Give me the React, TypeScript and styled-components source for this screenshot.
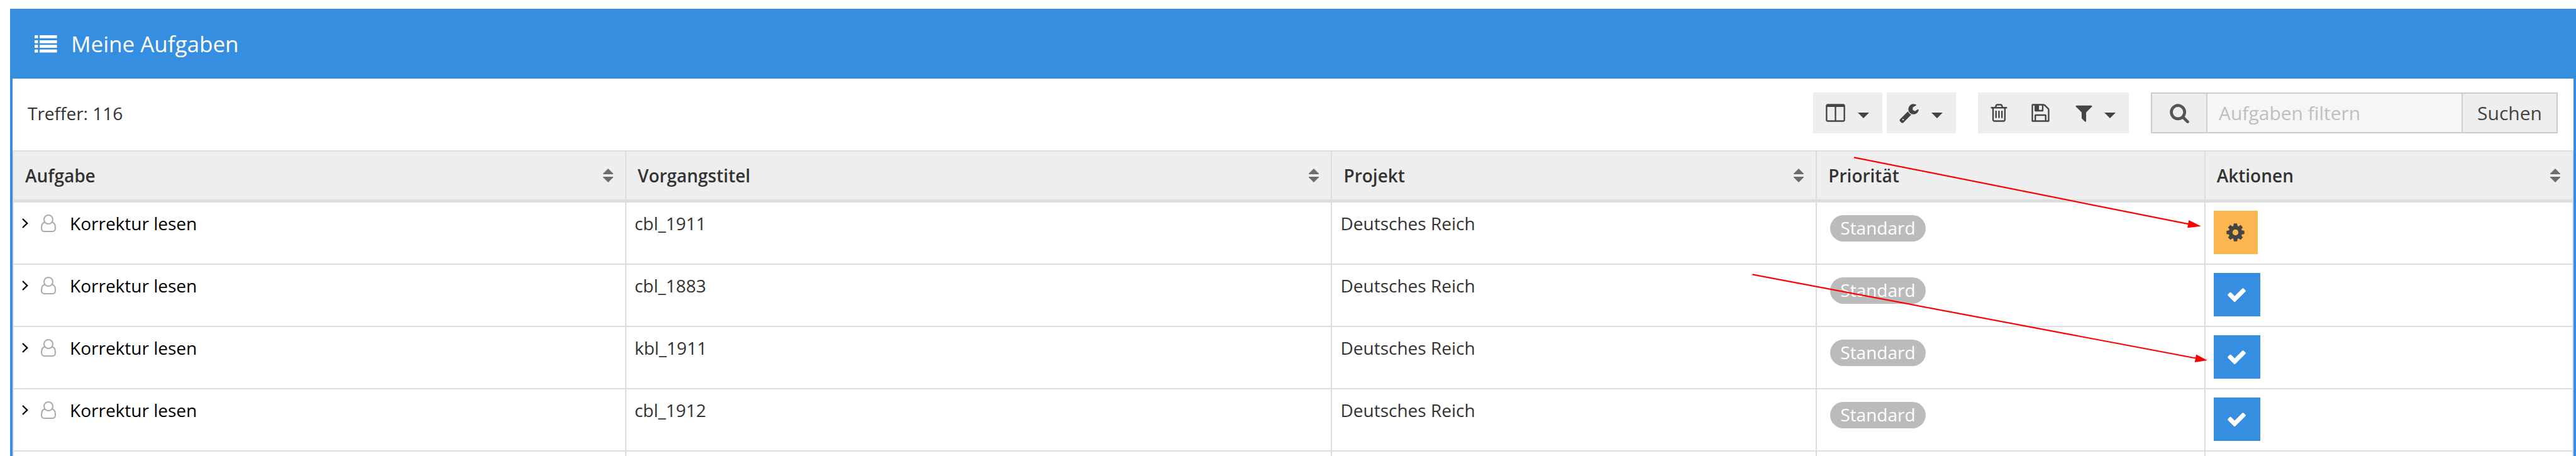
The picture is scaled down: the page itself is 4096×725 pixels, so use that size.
import React from 'react';
import styled, { createGlobalStyle } from 'styled-components';

const BLUE = '#368ee0';
const LINE = '#dddddd';

const GlobalStyle = createGlobalStyle`
  * { box-sizing: border-box; }
  body {
    margin: 0;
    background: #ffffff;
    color: #333333;
    font-family: 'Open Sans', 'Noto Sans', sans-serif;
    font-size: 28px;
    line-height: 40px;
  }
  button, input { font: inherit; color: inherit; margin: 0; }
`;

const Page = styled.div`
  position: relative;
  display: flex;
  height: 100vh;
  padding: 14px 0 0 16px;
  overflow: hidden;
`;

const Panel = styled.main`
  flex: 1;
  min-width: 0;
  border: solid ${BLUE};
  border-width: 0 4px;
`;

const PanelHeader = styled.header`
  display: flex;
  align-items: center;
  gap: 22px;
  height: 111px;
  padding: 0 35px;
  background: ${BLUE};
  color: #ffffff;
`;

const Title = styled.h1`
  margin: 0;
  font-size: 35px;
  font-weight: 400;
`;

const Toolbar = styled.div`
  display: flex;
  align-items: center;
  padding: 22px 25px 27px 24px;
`;

const HitCount = styled.span`
  flex: 1;
`;

const ButtonGroup = styled.div`
  display: flex;
  gap: 7px;
  margin-right: 35px;
`;

const JoinedGroup = styled(ButtonGroup)`
  gap: 0;
`;

const ToolButton = styled.button`
  display: flex;
  align-items: center;
  justify-content: center;
  height: 65px;
  min-width: 66px;
  padding: 0;
  border: 0;
  background: #eeeeee;
  color: #444444;
`;

const MenuButton = styled(ToolButton)<{ $tight?: boolean }>`
  gap: ${p => (p.$tight ? 16 : 19)}px;
  padding: 0 21px 0 ${p => (p.$tight ? 20 : 19)}px;
`;

const SearchForm = styled.form`
  display: flex;
  height: 65px;
  border: 2px solid #cccccc;
  background: #eeeeee;
  color: #444444;
  font-size: 30px;
`;

const SearchLabel = styled.label`
  display: flex;
  align-items: center;
  justify-content: center;
  width: 88px;
  border-right: 2px solid #cccccc;
  color: #555555;
`;

const SearchInput = styled.input`
  width: 404px;
  padding: 0 18px;
  border: 0;
  border-radius: 0;
  outline: 0;
  background: #f6f6f6;
  &::placeholder { color: #bfbfbf; opacity: 1; }
`;

const SearchButton = styled.button`
  width: 151px;
  padding: 0;
  border: 0;
  border-left: 2px solid #cccccc;
  background: transparent;
`;

const TaskTable = styled.table`
  width: 100%;
  table-layout: fixed;
  border-collapse: separate;
  border-spacing: 0;
  border-right: 2px solid ${LINE};
`;

const Column = styled.col<{ $share: number }>`
  width: ${p => p.$share}%;
`;

const HeadCell = styled.th`
  height: 83px;
  padding: 0 19px 0 18px;
  border: solid ${LINE};
  border-width: 2px 0 5px 2px;
  background: #eeeeee;
  font-weight: 600;
  text-align: left;
`;

const HeadContent = styled.div`
  display: flex;
  align-items: center;
  justify-content: space-between;
`;

const SortButton = styled.button`
  display: flex;
  padding: 0;
  border: 0;
  background: none;
  color: #6b6e6b;
`;

const Cell = styled.td`
  height: 99px;
  padding: 13px 13px 0;
  border: solid ${LINE};
  border-width: 0 0 2px 2px;
  vertical-align: top;
`;

const TaskLink = styled.a`
  display: flex;
  align-items: center;
  color: #000000;
  text-decoration: none;
`;

const TaskName = styled.span`
  margin-left: 20px;
`;

const PriorityBadge = styled.span`
  display: block;
  width: max-content;
  margin: 7px 0 0 8px;
  padding: 0 16px 2px;
  border-radius: 21px;
  background: #bbbbbb;
  color: #ffffff;
`;

const ActionButton = styled.button<{ $kind: 'work' | 'accept' }>`
  display: flex;
  align-items: center;
  justify-content: center;
  width: ${p => (p.$kind === 'work' ? 70 : 74)}px;
  height: 69px;
  padding: 0;
  border: 0;
  background: ${p => (p.$kind === 'work' ? '#fab750' : BLUE)};
  color: ${p => (p.$kind === 'work' ? '#444444' : '#ffffff')};
`;

const Annotation = styled.svg`
  position: absolute;
  top: 0;
  left: 0;
  width: 100%;
  height: auto;
  pointer-events: none;
`;

const paths = {
  columns:
    'M224 1536h608v-1152h-640v1120q0 13 9.5 22.5t22.5 9.5zm1376-32v-1120h-640v1152h608q13 0 22.5-9.5t9.5-22.5zm128-1216v1216q0 66-47 113t-113 47h-1344q-66 0-113-47t-47-113v-1216q0-66 47-113t113-47h1344q66 0 113 47t47 113z',
  wrench:
    'M448 1472q0-26-19-45t-45-19-45 19-19 45 19 45 45 19 45-19 19-45zm644-420l-682 682q-37 37-90 37-52 0-91-37l-106-108q-38-36-38-90 0-53 38-91l681-681q39 98 114.5 173.5t173.5 114.5zm634-435q0 39-23 106-47 134-164.5 217.5t-258.5 83.5q-185 0-316.5-131.5t-131.5-316.5 131.5-316.5 316.5-131.5q58 0 121.5 16.5t107.5 46.5q16 11 16 28t-16 28l-293 169v224l193 107q5-3 79-48.5t135.5-81 70.5-35.5q15 0 23.5 10t8.5 25z',
  trash:
    'M704 736v576q0 14-9 23t-23 9h-64q-14 0-23-9t-9-23v-576q0-14 9-23t23-9h64q14 0 23 9t9 23zm256 0v576q0 14-9 23t-23 9h-64q-14 0-23-9t-9-23v-576q0-14 9-23t23-9h64q14 0 23 9t9 23zm256 0v576q0 14-9 23t-23 9h-64q-14 0-23-9t-9-23v-576q0-14 9-23t23-9h64q14 0 23 9t9 23zm128 724v-948h-896v948q0 22 7 40.5t14.5 27 10.5 8.5h832q3 0 10.5-8.5t14.5-27 7-40.5zm-672-1076h448l-48-117q-7-9-17-11h-317q-10 2-17 11zm928 32v64q0 14-9 23t-23 9h-96v948q0 83-47 143.5t-113 60.5h-832q-66 0-113-58.5t-47-141.5v-952h-96q-14 0-23-9t-9-23v-64q0-14 9-23t23-9h309l70-167q15-37 54-63t79-26h320q40 0 79 26t54 63l70 167h309q14 0 23 9t9 23z',
  save:
    'M512 1536h768v-384h-768v384zm896 0h128v-896q0-14-10-38.5t-20-34.5l-281-281q-10-10-34-20t-39-10v416q0 40-28 68t-68 28h-576q-40 0-68-28t-28-68v-416h-128v1280h128v-416q0-40 28-68t68-28h832q40 0 68 28t28 68v416zm-384-928v-320q0-13-9.5-22.5t-22.5-9.5h-192q-13 0-22.5 9.5t-9.5 22.5v320q0 13 9.5 22.5t22.5 9.5h192q13 0 22.5-9.5t9.5-22.5zm640 32v928q0 40-28 68t-68 28h-1344q-40 0-68-28t-28-68v-1344q0-40 28-68t68-28h928q40 0 88 20t76 48l280 280q28 28 48 76t20 88z',
  filter:
    'M1595 295q17 41-14 70l-493 493v742q0 42-39 59-13 5-25 5-27 0-45-19l-256-256q-19-19-19-45v-486l-493-493q-31-29-14-70 17-39 59-39h1280q42 0 59 39z',
  search:
    'M1216 832q0-185-131.5-316.5t-316.5-131.5-316.5 131.5-131.5 316.5 131.5 316.5 316.5 131.5 316.5-131.5 131.5-316.5zm512 832q0 52-38 90t-90 38q-54 0-90-38l-343-342q-179 124-399 124-143 0-273.5-55.5t-225-150-150-225-55.5-273.5 55.5-273.5 150-225 225-150 273.5-55.5 273.5 55.5 225 150 150 225 55.5 273.5q0 220-124 399l343 343q37 37 37 90z',
  check:
    'M1671 566q0 40-28 68l-724 724-136 136q-28 28-68 28t-68-28l-136-136-362-362q-28-28-28-68t28-68l136-136q28-28 68-28t68 28l294 295 656-657q28-28 68-28t68 28l136 136q28 28 28 68z',
  gear:
    'M1152 896q0-106-75-181t-181-75-181 75-75 181 75 181 181 75 181-75 75-181zm512-109v222q0 12-8 23t-20 13l-185 28q-19 54-39 91 35 50 107 138 10 12 10 25t-9 23q-27 37-99 108t-94 71q-12 0-26-9l-138-108q-44 23-91 38-16 136-29 186-7 28-36 28h-222q-14 0-24.5-8.5t-11.5-21.5l-28-184q-49-16-90-37l-141 107q-10 9-25 9-14 0-25-11-126-114-165-168-7-10-7-23 0-12 8-23 15-21 51-66.5t54-70.5q-27-50-41-99l-183-27q-13-2-21-12.5t-8-23.5v-222q0-12 8-23t19-13l186-28q14-46 39-92-40-57-107-138-10-12-10-24 0-10 9-23 26-36 98.5-107.5t94.5-71.5q13 0 26 10l138 107q44-23 91-38 16-136 29-186 7-28 36-28h222q14 0 24.5 8.5t11.5 21.5l28 184q49 16 90 37l142-107q9-9 24-9 13 0 25 10 129 119 165 170 7 8 7 22 0 12-8 23-15 21-51 66.5t-54 70.5q26 50 41 98l183 28q13 2 21 12.5t8 23.5z',
};

const Icon = ({ name }: { name: keyof typeof paths }) => (
  <svg width="33" height="33" viewBox="0 0 1792 1792" fill="currentColor" aria-hidden="true">
    <path d={paths[name]} />
  </svg>
);

const Caret = () => (
  <svg width="18" height="17" viewBox="0 0 18 17" fill="currentColor" aria-hidden="true">
    <path d="M0 8h18l-9 9z" />
  </svg>
);

const ListIcon = () => (
  <svg width="36" height="28" viewBox="0 0 36 28" fill="currentColor" aria-hidden="true">
    {[0, 8, 15.3, 22.8].map(y => (
      <React.Fragment key={y}>
        <rect x="0" y={y} width="5.4" height="4.8" rx="0.6" />
        <rect x="8" y={y} width="27.6" height="4.8" rx="0.6" />
      </React.Fragment>
    ))}
  </svg>
);

const SortIcon = () => (
  <svg width="16" height="22" viewBox="0 0 16 22" fill="currentColor" aria-hidden="true">
    <path d="M8 0l8 8v1H0V8zM0 13h16v1l-8 8-8-8z" />
  </svg>
);

const Chevron = () => (
  <svg width="12" height="16" viewBox="0 0 12 16" fill="none" stroke="currentColor" strokeWidth="2.4" aria-hidden="true">
    <path d="M1 1l7.2 7L1 15" />
  </svg>
);

const UserIcon = () => (
  <svg width="44" height="28" viewBox="-18 0 44 28" fill="none" stroke="#aaaaaa" strokeWidth="2" aria-hidden="true">
    <ellipse cx="12" cy="8" rx="7" ry="7" />
    <path d="M6.2 12.2C2.800 13 1 16.500 1 21.500C1 25 2.600 27 5.400 27H18.600C21.400 27 23 25 23 21.500C23 16.500 21.200 13 17.800 12.200" />
  </svg>
);

const columns = [
  { label: 'Aufgabe', share: 23.93, sortable: true },
  { label: 'Vorgangstitel', share: 27.58, sortable: true },
  { label: 'Projekt', share: 18.94, sortable: true },
  { label: 'Priorität', share: 15.17, sortable: false },
  { label: 'Aktionen', share: 14.38, sortable: true },
];

const tasks: { process: string; kind: 'work' | 'accept' }[] = [
  { process: 'cbl_1911', kind: 'work' },
  { process: 'cbl_1883', kind: 'accept' },
  { process: 'kbl_1911', kind: 'accept' },
  { process: 'cbl_1912', kind: 'accept' },
];

export default function App() {
  return (
    <>
      <GlobalStyle />
      <Page>
        <Panel>
          <PanelHeader>
            <ListIcon />
            <Title>Meine Aufgaben</Title>
          </PanelHeader>
          <Toolbar>
            <HitCount>Treffer: 116</HitCount>
            <ButtonGroup>
              <MenuButton type="button" aria-label="Spalten">
                <Icon name="columns" />
                <Caret />
              </MenuButton>
              <MenuButton type="button" aria-label="Werkzeuge">
                <Icon name="wrench" />
                <Caret />
              </MenuButton>
            </ButtonGroup>
            <JoinedGroup>
              <ToolButton type="button" aria-label="Löschen">
                <Icon name="trash" />
              </ToolButton>
              <ToolButton type="button" aria-label="Speichern">
                <Icon name="save" />
              </ToolButton>
              <MenuButton type="button" $tight aria-label="Filter">
                <Icon name="filter" />
                <Caret />
              </MenuButton>
            </JoinedGroup>
            <SearchForm onSubmit={e => e.preventDefault()}>
              <SearchLabel htmlFor="task-filter" aria-label="Aufgaben filtern">
                <Icon name="search" />
              </SearchLabel>
              <SearchInput id="task-filter" type="text" placeholder="Aufgaben filtern" />
              <SearchButton type="submit">Suchen</SearchButton>
            </SearchForm>
          </Toolbar>
          <TaskTable>
            <colgroup>
              {columns.map(c => (
                <Column key={c.label} $share={c.share} />
              ))}
            </colgroup>
            <thead>
              <tr>
                {columns.map(c => (
                  <HeadCell key={c.label} scope="col">
                    <HeadContent>
                      {c.label}
                      {c.sortable && (
                        <SortButton type="button" aria-label={`${c.label} sortieren`}>
                          <SortIcon />
                        </SortButton>
                      )}
                    </HeadContent>
                  </HeadCell>
                ))}
              </tr>
            </thead>
            <tbody>
              {tasks.map(t => (
                <tr key={t.process}>
                  <Cell>
                    <TaskLink href="#">
                      <Chevron />
                      <UserIcon />
                      <TaskName>Korrektur lesen</TaskName>
                    </TaskLink>
                  </Cell>
                  <Cell>{t.process}</Cell>
                  <Cell>Deutsches Reich</Cell>
                  <Cell>
                    <PriorityBadge>Standard</PriorityBadge>
                  </Cell>
                  <Cell>
                    <ActionButton
                      type="button"
                      $kind={t.kind}
                      aria-label={t.kind === 'work' ? 'Aufgabe bearbeiten' : 'Aufgabe annehmen'}
                    >
                      <Icon name={t.kind === 'work' ? 'gear' : 'check'} />
                    </ActionButton>
                  </Cell>
                </tr>
              ))}
              <tr>
                {columns.map(c => (
                  <Cell key={c.label} />
                ))}
              </tr>
            </tbody>
          </TaskTable>
        </Panel>
        <Annotation viewBox="0 0 4096 725" fill="#ff0000" stroke="#ff0000" aria-hidden="true">
          <path d="M2948 250.300L3482 356.700M2786.400 436.400L3494 570" strokeWidth="2.200" />
          <path d="M3499.800 359.800L3480.400 350L3478.100 362.200zM3509.900 573L3492 563.500L3489.800 576z" stroke="none" />
        </Annotation>
      </Page>
    </>
  );
}
